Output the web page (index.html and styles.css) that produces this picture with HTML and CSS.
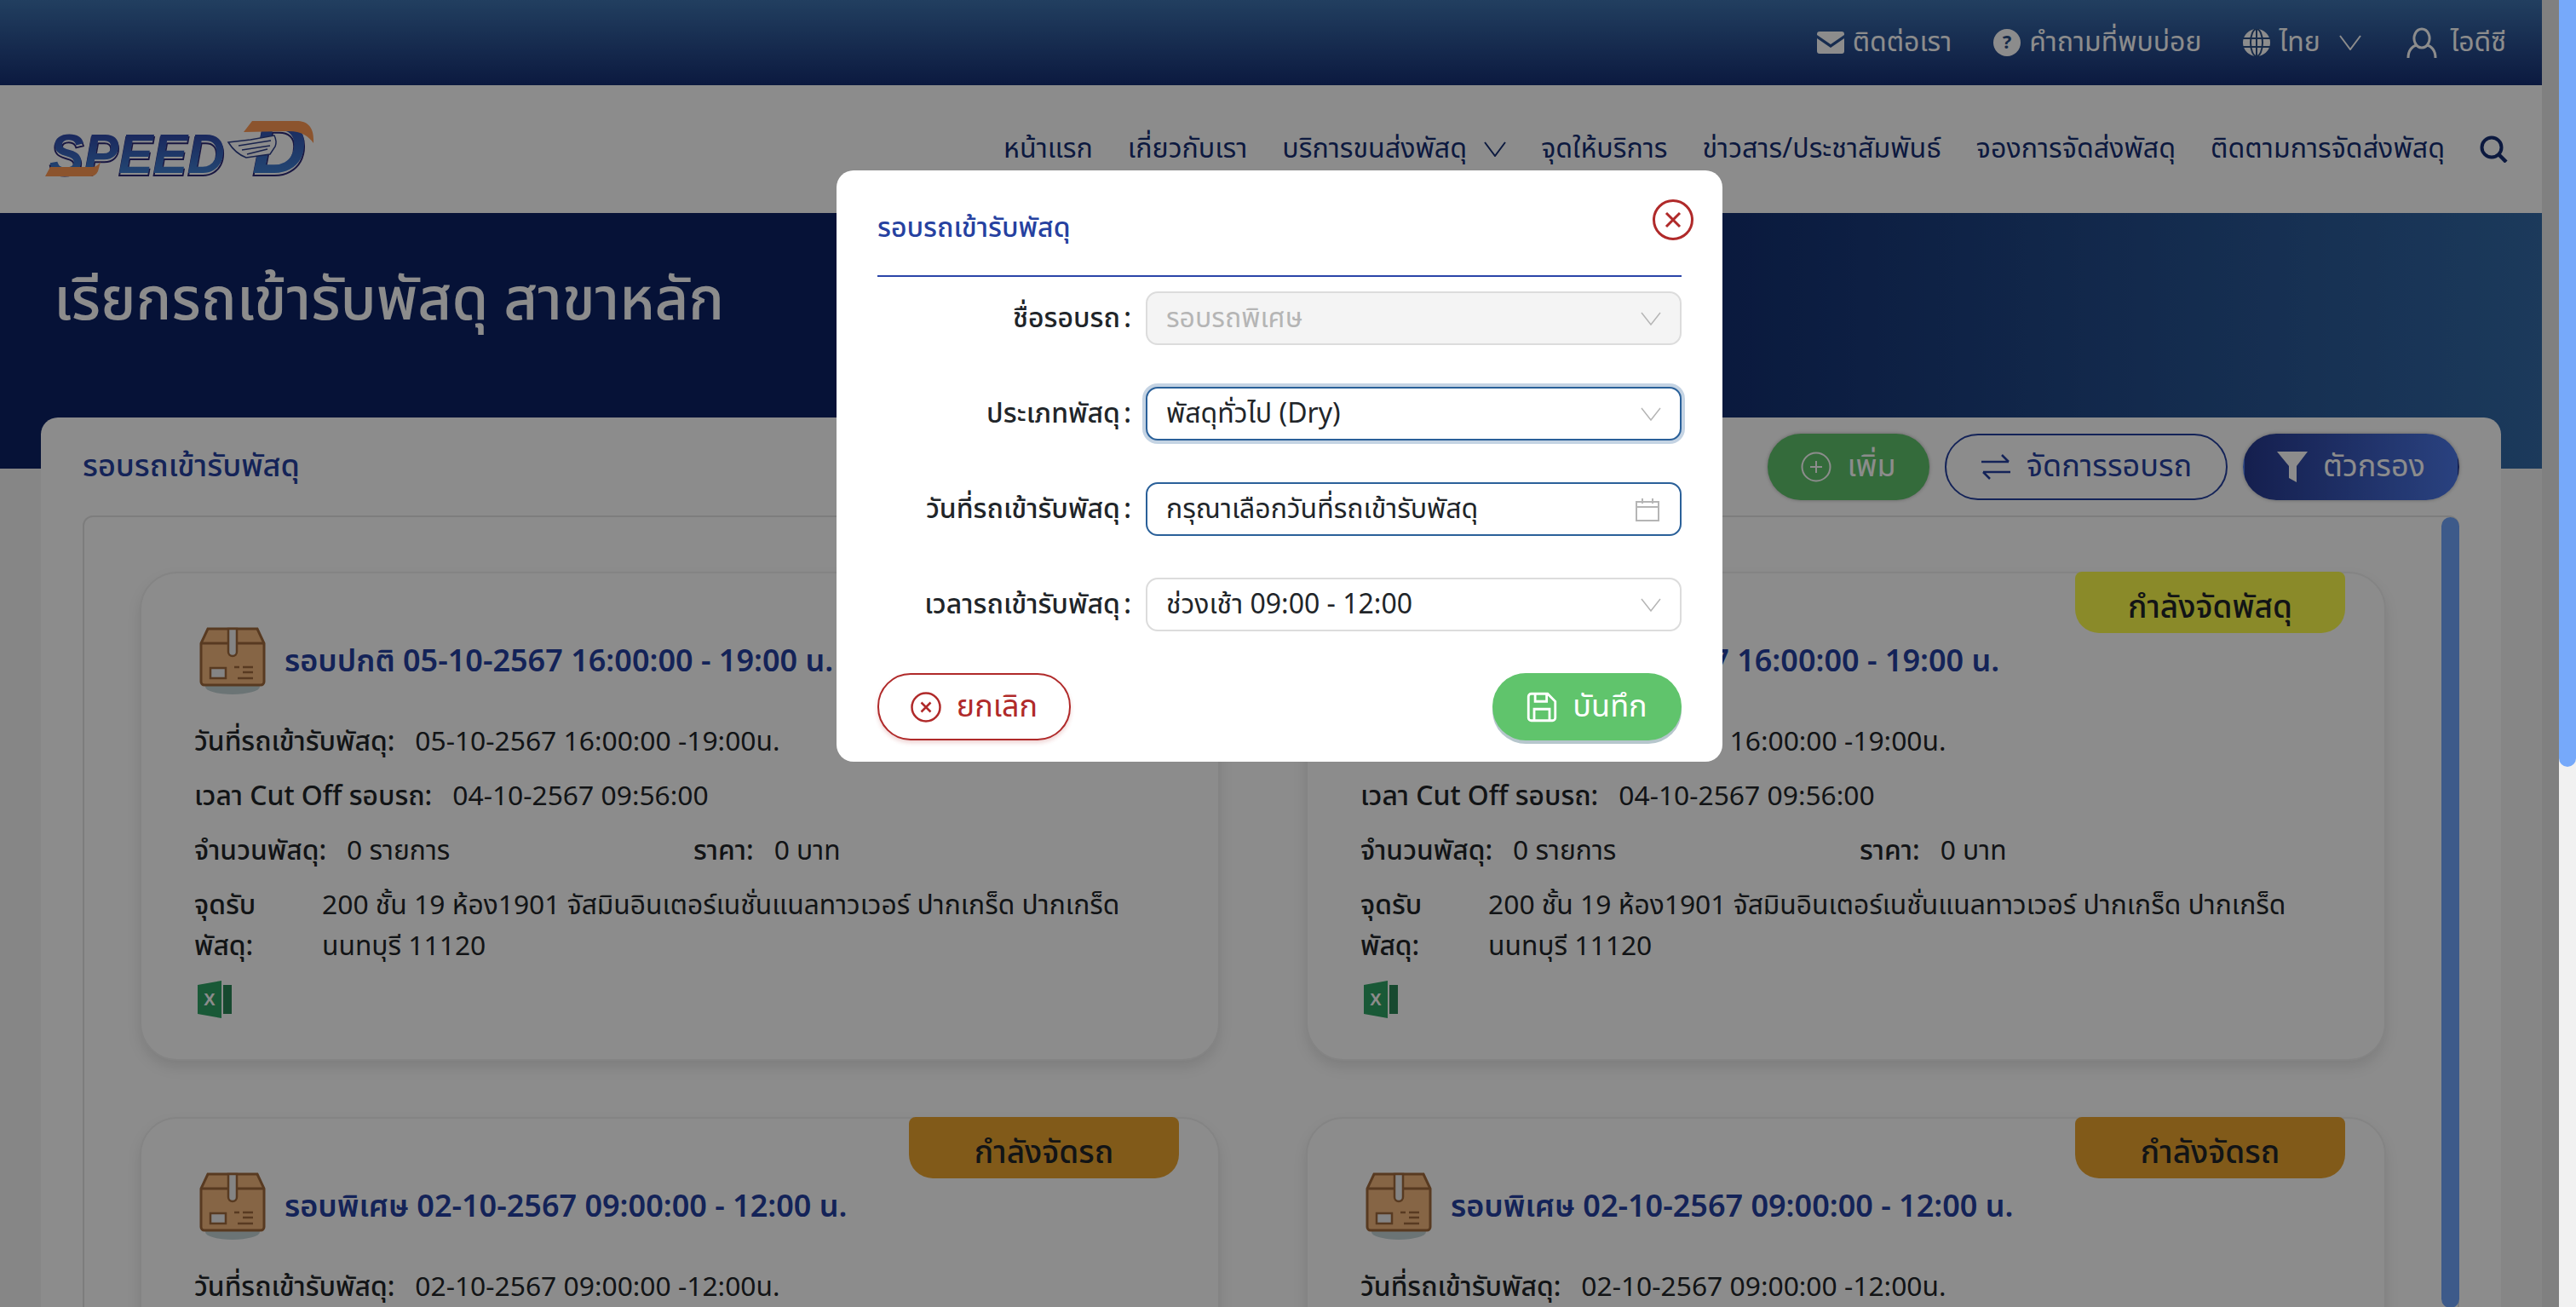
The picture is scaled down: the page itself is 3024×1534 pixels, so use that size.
FILE: index.html
```html
<!DOCTYPE html>
<html lang="th">
<head>
    <meta charset="UTF-8">
    <meta name="viewport" content="width=device-width, initial-scale=1.0">
    <title>เรียกรถเข้ารับพัสดุ</title>
    <link rel="stylesheet" href="styles.css">
</head>
<body>
<div class="app">
    <div class="viewport">
        <div class="page">
            <div class="topbar">
                <a class="topbar-item">
                    <svg class="ico-mail" viewBox="0 0 32 26"><path fill="#fff" d="M3 0h26a3 3 0 0 1 3 3v1L16 15 0 4V3a3 3 0 0 1 3-3zM0 8l16 11L32 8v15a3 3 0 0 1-3 3H3a3 3 0 0 1-3-3z"/></svg>
                    ติดต่อเรา
                </a>
                <a class="topbar-item">
                    <svg class="ico-round" viewBox="0 0 32 32"><circle cx="16" cy="16" r="16" fill="#fff"/><text x="16" y="23" text-anchor="middle" class="qmark">?</text></svg>
                    คำถามที่พบบ่อย
                </a>
                <a class="topbar-item">
                    <svg class="ico-round" viewBox="0 0 32 32"><circle cx="16" cy="16" r="16" fill="#fff"/><g fill="none" stroke="#2a4f86" stroke-width="2"><ellipse cx="16" cy="16" rx="7" ry="16"/><path d="M16 0v32M0 11h32M0 21h32"/></g></svg>
                    ไทย
                    <svg class="ico-chev" viewBox="0 0 26 18"><path d="M1 1l12 16L25 1" fill="none" stroke="#fff" stroke-width="2"/></svg>
                </a>
                <a class="topbar-item topbar-user">
                    <svg class="ico-user" viewBox="0 0 36 36"><path d="M18 2a9 11 0 1 0 0.01 0zM2 36c0-9 5-14 10-15M34 36c0-9-5-14-10-15" fill="none" stroke="#fff" stroke-width="3"/></svg>
                    ไอดีซี
                </a>
            </div>

            <div class="navbar">
                <svg class="logo" viewBox="48 136 326 76">
                    <defs>
                        <linearGradient id="logoblue" x1="0" y1="0" x2="0" y2="1">
                            <stop offset="0" stop-color="#2c3a9e"/>
                            <stop offset="1" stop-color="#4490dd"/>
                        </linearGradient>
                    </defs>
                    <g class="logo-text">
                        <text x="58" y="205" textLength="206" lengthAdjust="spacingAndGlyphs" class="logo-back">SPEED</text>
                        <text x="58" y="202" textLength="206" lengthAdjust="spacingAndGlyphs" fill="url(#logoblue)">SPEED</text>
                        <text x="296" y="205" class="logo-d logo-back">D</text>
                        <text x="296" y="202" class="logo-d" fill="url(#logoblue)">D</text>
                    </g>
                    <path fill="#ff9a55" d="M53 206l6-11h50c3 0 7-3 9-6l-3 11c-2 4-5 6-9 6zM286 154l10-13h52c14 0 21 8 20 26-6-9-16-15-32-14z"/>
                    <path fill="#fff" stroke="#2d3f8a" stroke-width="1.5" d="M268 166l26-3 28-5c2 4 3 8 1 13l-6 9-28 4c-8-3-16-10-21-18z"/>
                    <path fill="none" stroke="#2d3f8a" stroke-width="1.5" d="M280 170l38-6M284 175l33-5M290 180l24-6"/>
                </svg>
                <ul class="nav-menu">
                    <li>หน้าแรก</li>
                    <li>เกี่ยวกับเรา</li>
                    <li class="has-chev">บริการขนส่งพัสดุ
                        <svg class="ico-chev" viewBox="0 0 26 18"><path d="M1 1l12 16L25 1" fill="none" stroke="#162f74" stroke-width="2"/></svg>
                    </li>
                    <li>จุดให้บริการ</li>
                    <li>ข่าวสาร/ประชาสัมพันธ์</li>
                    <li>จองการจัดส่งพัสดุ</li>
                    <li>ติดตามการจัดส่งพัสดุ</li>
                    <li class="nav-search">
                        <svg viewBox="0 0 33 32"><circle cx="14" cy="14" r="11.5" fill="none" stroke="#162f74" stroke-width="4"/><path d="M22 22l9 9" stroke="#162f74" stroke-width="4.5"/></svg>
                    </li>
                </ul>
            </div>

            <div class="hero">
                <h1>เรียกรถเข้ารับพัสดุ สาขาหลัก</h1>
            </div>

            <div class="box">
                <div class="box-head">
                    <h2>รอบรถเข้ารับพัสดุ</h2>
                    <div class="box-actions">
                        <button class="btn btn-add">
                            <svg viewBox="0 0 36 36"><circle cx="18" cy="18" r="16.5" fill="none" stroke="#fff" stroke-width="2"/><path d="M18 11v14M11 18h14" stroke="#fff" stroke-width="2"/></svg>
                            เพิ่ม
                        </button>
                        <button class="btn btn-manage">
                            <svg viewBox="0 0 36 32"><path d="M1 10h32M25 2l8 8M35 22H3M11 30l-8-8" fill="none" stroke="#2641a0" stroke-width="2.5"/></svg>
                            จัดการรอบรถ
                        </button>
                        <button class="btn btn-filter">
                            <svg viewBox="0 0 36 36"><path d="M0 0h36L23 17v19l-9-5V17z" fill="#fff"/></svg>
                            ตัวกรอง
                        </button>
                    </div>
                </div>

                <div class="panel">
                    <div class="card-grid">

                        <div class="card">
                            <span class="badge badge-yellow">กำลังจัดพัสดุ</span>
                            <div class="card-head">
                                <svg class="ico-box" viewBox="0 0 80 84"><use href="#box"/></svg>
                                <h3>รอบปกติ 05-10-2567 16:00:00 - 19:00 น.</h3>
                            </div>
                            <div class="row"><b>วันที่รถเข้ารับพัสดุ:</b><span>05-10-2567 16:00:00 -19:00น.</span></div>
                            <div class="row"><b>เวลา Cut Off รอบรถ:</b><span>04-10-2567 09:56:00</span></div>
                            <div class="row row-split">
                                <div><b>จำนวนพัสดุ:</b><span>0 รายการ</span></div>
                                <div><b>ราคา:</b><span>0 บาท</span></div>
                            </div>
                            <div class="row-address">
                                <b>จุดรับพัสดุ:</b>
                                <span>200 ชั้น 19 ห้อง1901 จัสมินอินเตอร์เนชั่นแนลทาวเวอร์ ปากเกร็ด ปากเกร็ด<br>นนทบุรี 11120</span>
                            </div>
                            <svg class="ico-excel" viewBox="0 0 40 44"><use href="#excel"/></svg>
                        </div>

                        <div class="card">
                            <span class="badge badge-yellow">กำลังจัดพัสดุ</span>
                            <div class="card-head">
                                <svg class="ico-box" viewBox="0 0 80 84"><use href="#box"/></svg>
                                <h3>รอบปกติ 05-10-2567 16:00:00 - 19:00 น.</h3>
                            </div>
                            <div class="row"><b>วันที่รถเข้ารับพัสดุ:</b><span>05-10-2567 16:00:00 -19:00น.</span></div>
                            <div class="row"><b>เวลา Cut Off รอบรถ:</b><span>04-10-2567 09:56:00</span></div>
                            <div class="row row-split">
                                <div><b>จำนวนพัสดุ:</b><span>0 รายการ</span></div>
                                <div><b>ราคา:</b><span>0 บาท</span></div>
                            </div>
                            <div class="row-address">
                                <b>จุดรับพัสดุ:</b>
                                <span>200 ชั้น 19 ห้อง1901 จัสมินอินเตอร์เนชั่นแนลทาวเวอร์ ปากเกร็ด ปากเกร็ด<br>นนทบุรี 11120</span>
                            </div>
                            <svg class="ico-excel" viewBox="0 0 40 44"><use href="#excel"/></svg>
                        </div>

                        <div class="card">
                            <span class="badge badge-orange">กำลังจัดรถ</span>
                            <div class="card-head">
                                <svg class="ico-box" viewBox="0 0 80 84"><use href="#box"/></svg>
                                <h3>รอบพิเศษ 02-10-2567 09:00:00 - 12:00 น.</h3>
                            </div>
                            <div class="row"><b>วันที่รถเข้ารับพัสดุ:</b><span>02-10-2567 09:00:00 -12:00น.</span></div>
                        </div>

                        <div class="card">
                            <span class="badge badge-orange">กำลังจัดรถ</span>
                            <div class="card-head">
                                <svg class="ico-box" viewBox="0 0 80 84"><use href="#box"/></svg>
                                <h3>รอบพิเศษ 02-10-2567 09:00:00 - 12:00 น.</h3>
                            </div>
                            <div class="row"><b>วันที่รถเข้ารับพัสดุ:</b><span>02-10-2567 09:00:00 -12:00น.</span></div>
                        </div>

                    </div>
                    <div class="panel-scroll"><div class="panel-thumb"></div></div>
                </div>
            </div>
        </div>

        <div class="overlay">
            <div class="modal">
                <div class="modal-head">
                    <h4>รอบรถเข้ารับพัสดุ</h4>
                    <svg class="modal-close" viewBox="0 0 48 48"><circle cx="24" cy="24" r="22.5" fill="none" stroke="#b02a2a" stroke-width="3"/><path d="M16 16l16 16M32 16L16 32" stroke="#b02a2a" stroke-width="3"/></svg>
                </div>

                <div class="form-row">
                    <label>ชื่อรอบรถ :</label>
                    <div class="field field-disabled">รอบรถพิเศษ
                        <svg class="field-chev" viewBox="0 0 24 16"><path d="M1 1l11 14L23 1" fill="none" stroke="#b5b5b5" stroke-width="1.5"/></svg>
                    </div>
                </div>
                <div class="form-row">
                    <label>ประเภทพัสดุ :</label>
                    <div class="field field-focus">พัสดุทั่วไป (Dry)
                        <svg class="field-chev" viewBox="0 0 24 16"><path d="M1 1l11 14L23 1" fill="none" stroke="#b5b5b5" stroke-width="1.5"/></svg>
                    </div>
                </div>
                <div class="form-row">
                    <label>วันที่รถเข้ารับพัสดุ :</label>
                    <div class="field field-active">กรุณาเลือกวันที่รถเข้ารับพัสดุ
                        <svg class="field-cal" viewBox="0 0 28 28"><path d="M1 5h26v22H1zM1 11h26M8 1v6M20 1v6" fill="none" stroke="#b5b5b5" stroke-width="2"/></svg>
                    </div>
                </div>
                <div class="form-row">
                    <label>เวลารถเข้ารับพัสดุ :</label>
                    <div class="field">ช่วงเช้า 09:00 - 12:00
                        <svg class="field-chev" viewBox="0 0 24 16"><path d="M1 1l11 14L23 1" fill="none" stroke="#b5b5b5" stroke-width="1.5"/></svg>
                    </div>
                </div>

                <div class="modal-foot">
                    <button class="btn btn-cancel">
                        <svg viewBox="0 0 36 36"><circle cx="18" cy="18" r="16.5" fill="none" stroke="#b02a2a" stroke-width="2.5"/><path d="M12.5 12.5l11 11M23.5 12.5l-11 11" stroke="#b02a2a" stroke-width="2.5"/></svg>
                        ยกเลิก
                    </button>
                    <button class="btn btn-save">
                        <svg viewBox="0 0 32 32"><path d="M2 5a3 3 0 0 1 3-3h17l8 8v17a3 3 0 0 1-3 3H5a3 3 0 0 1-3-3zM9 2v8h12V2M8 30V18h16v12" fill="none" stroke="#fff" stroke-width="2.5"/></svg>
                        บันทึก
                    </button>
                </div>
            </div>
        </div>
    </div>

    <div class="scrollbar"><div class="scrollbar-thumb"></div></div>
</div>

<!-- icons used by every card -->
<svg class="icon-defs">
    <symbol id="box" viewBox="0 0 80 84">
        <ellipse cx="40" cy="71" rx="32" ry="9" fill="#c4d4d6"/>
        <path d="M11 3h58l8 17v45a4 4 0 0 1-4 4H7a4 4 0 0 1-4-4V20z" fill="#f5b97f" stroke="#a06a3c" stroke-width="3"/>
        <path d="M3 20h74" stroke="#a06a3c" stroke-width="3"/>
        <path d="M35 3h10v27a5 5 0 0 1-10 0z" fill="#f0f0f0" stroke="#a06a3c" stroke-width="2.5"/>
        <rect x="14" y="49" width="18" height="12" fill="#f0f0f0" stroke="#a06a3c" stroke-width="2.5"/>
        <path d="M42 48h6M52 48h12M52 54h12M46 61h18" stroke="#a06a3c" stroke-width="2.5"/>
    </symbol>
    <symbol id="excel" viewBox="0 0 40 44">
        <path d="M0 5L28 0v44L0 39z" fill="#2fa264"/>
        <path d="M30 5h10v34H30z" fill="#2b8657"/>
        <text x="14" y="29" text-anchor="middle" class="excel-x">X</text>
    </symbol>
</svg>
</body>
</html>
```
FILE: styles.css
```css
* {
    box-sizing: border-box;
}

html, body {
    margin: 0;
    height: 100%;
    overflow: hidden;
}

body {
    font-family: "Noto Sans", "Noto Sans Thai", "Open Sans", sans-serif;
    font-size: 31.8px;
    color: #212529;
    background-color: #fff;
}

.icon-defs {
    position: absolute;
    width: 0;
    height: 0;
}

.app {
    display: flex;
    height: 100vh;
}

.viewport {
    position: relative;
    flex: 1;
    overflow: hidden;
    background-color: #e9e9e9;
}

.scrollbar {
    width: 20px;
    background-color: #f1f1f1;
}

.scrollbar-thumb {
    height: 900px;
    background-color: #76a9fa;
    border-radius: 0 0 10px 10px;
}

.page {
    width: 2984px;
    height: 100%;
    overflow: hidden;
    background-color: #f5f5f5;
}

/* top bar */
.topbar {
    display: flex;
    justify-content: flex-end;
    align-items: center;
    gap: 49px;
    height: 100px;
    padding-right: 42px;
    background: linear-gradient(180deg, #3e73af, #162f74);
}

.topbar-item {
    display: flex;
    align-items: center;
    gap: 10px;
    color: #fff;
    font-size: 32px;
}

.topbar-user {
    margin-left: 4px;
}

.ico-mail {
    width: 32px;
    height: 26px;
}

.ico-round {
    width: 32px;
    height: 32px;
}

.qmark {
    font-size: 22px;
    font-weight: 700;
    fill: #2a4f86;
}

.ico-chev {
    width: 26px;
    height: 18px;
    margin-left: 12px;
}

.ico-user {
    width: 36px;
    height: 36px;
    margin-right: 6px;
}

/* nav */
.navbar {
    display: flex;
    justify-content: space-between;
    align-items: center;
    height: 150px;
    padding: 0 40px 0 48px;
    background-color: #fff;
}

.logo {
    width: 326px;
    height: 76px;
}

.logo-text {
    font-family: "Liberation Sans", sans-serif;
    font-weight: 700;
    font-style: italic;
    font-size: 65px;
}

.logo-d {
    font-size: 88px;
}

.logo-back {
    fill: #fff;
    stroke: #2d2a78;
    stroke-width: 2;
}

.nav-menu {
    display: flex;
    align-items: center;
    gap: 41px;
    margin: 0;
    padding: 0;
    list-style: none;
    color: #162f74;
    font-size: 32.2px;
}

.nav-menu li.has-chev {
    display: flex;
    align-items: center;
}

.nav-menu .ico-chev {
    margin-left: 20px;
}

.nav-search svg {
    display: block;
    width: 33px;
    height: 32px;
}

/* hero */
.hero {
    height: 300px;
    padding: 51px 0 0 63px;
    background: linear-gradient(90deg, #0b2164 60%, #336aa7);
}

.hero h1 {
    margin: 0;
    color: #fff;
    font-size: 69px;
    font-weight: 500;
}

/* main box */
.box {
    margin: -60px 48px 0;
    padding: 19px 49px 0;
    background-color: #fff;
    border-radius: 20px 20px 0 0;
}

.box-head {
    display: flex;
    justify-content: space-between;
    align-items: center;
    height: 77px;
    margin-bottom: 19px;
}

.box-head h2 {
    margin: 0;
    color: #2641a0;
    font-size: 36px;
    font-weight: 500;
}

.box-actions {
    display: flex;
    gap: 18px;
}

.btn {
    display: flex;
    justify-content: center;
    align-items: center;
    gap: 18px;
    height: 78px;
    border: 2px solid transparent;
    border-radius: 39px;
    font-family: inherit;
    font-size: 36px;
}

.btn svg {
    width: 36px;
    height: 36px;
}

.btn-add {
    width: 190px;
    color: #fff;
    background-color: #60c46c;
    box-shadow: 0 0 4px rgba(0, 0, 0, .3);
}

.btn-manage {
    width: 332px;
    color: #2641a0;
    background-color: #fff;
    border-color: #2641a0;
}

.btn-filter {
    width: 254px;
    color: #fff;
    background: linear-gradient(90deg, #26398f, #4c78e8);
    box-shadow: 0 0 4px rgba(0, 0, 0, .3);
}

/* panel with cards */
.panel {
    display: flex;
    justify-content: space-between;
    height: 1000px;
    border: 2px solid #e4e4e4;
    border-radius: 12px 12px 0 0;
}

.card-grid {
    display: grid;
    grid-template-columns: 1268px 1268px;
    grid-auto-rows: 574px;
    gap: 66px 101px;
    padding: 64px 0 0 65px;
}

.panel-scroll {
    width: 21px;
    margin-right: -2px;
}

.panel-thumb {
    height: 928px;
    background-color: #6fa4fb;
    border-radius: 11px;
}

.card {
    position: relative;
    padding: 62px 40px 0 62px;
    background-color: #fff;
    border: 2px solid #f0f0f0;
    border-radius: 44px;
    box-shadow: 0 8px 16px rgba(0, 0, 0, .1);
}

.badge {
    position: absolute;
    top: -2px;
    right: 46px;
    width: 317px;
    height: 72px;
    border-radius: 8px 8px 28px 28px;
    color: #212529;
    font-size: 37px;
    font-weight: 500;
    line-height: 80px;
    text-align: center;
}

.badge-yellow {
    background-color: #fbfb4b;
}

.badge-orange {
    background-color: #eba42f;
}

.card-head {
    display: flex;
    align-items: center;
    gap: 21px;
    margin-bottom: 26px;
}

.ico-box {
    width: 80px;
    height: 84px;
    margin-left: 5px;
}

.card-head h3 {
    margin: 0;
    color: #2641a0;
    font-size: 36px;
    font-weight: 600;
}

.row {
    height: 48px;
    margin-bottom: 16px;
    line-height: 48px;
    white-space: nowrap;
}

.row b, .row-address b {
    font-weight: 500;
}

.row b {
    margin-right: 24px;
}

.row-split {
    display: flex;
}

.row-split > div:first-child {
    width: 586px;
}

.row-address {
    display: grid;
    grid-template-columns: 150px 1fr;
    line-height: 48px;
    white-space: nowrap;
}

.row-address b {
    white-space: normal;
    width: 110px;
}

.ico-excel {
    display: block;
    width: 40px;
    height: 44px;
    margin-top: 18px;
    margin-left: 4px;
}

.excel-x {
    font-family: "Liberation Sans", sans-serif;
    font-size: 20px;
    font-weight: 700;
    fill: #fff;
}

/* modal */
.overlay {
    position: absolute;
    top: 0;
    left: 0;
    right: 0;
    bottom: 0;
    display: flex;
    justify-content: center;
    align-items: flex-start;
    padding-top: 200px;
    background-color: rgba(0, 0, 0, .45);
}

.modal {
    width: 1040px;
    height: 694px;
    padding: 0 48px;
    background-color: #fff;
    border-radius: 20px;
}

.modal-head {
    position: relative;
    height: 125px;
    padding-top: 44px;
    margin-bottom: 17px;
    border-bottom: 2px solid #2a45a8;
}

.modal-head h4 {
    margin: 0;
    color: #2641a0;
    font-size: 32px;
    font-weight: 500;
}

.modal-close {
    position: absolute;
    top: 34px;
    right: -14px;
    width: 48px;
    height: 48px;
}

.form-row {
    display: flex;
    justify-content: flex-end;
    align-items: center;
    gap: 17px;
    height: 63px;
    margin-bottom: 49px;
}

.form-row label {
    font-size: 32px;
    font-weight: 500;
    word-spacing: -4px;
    white-space: nowrap;
}

.field {
    position: relative;
    display: flex;
    align-items: center;
    width: 629px;
    height: 63px;
    padding-left: 22px;
    border: 2px solid #dcdcdc;
    border-radius: 14px;
    background-color: #fff;
    font-size: 32px;
}

.field-disabled {
    color: #b5b5b5;
    background-color: #f4f4f4;
}

.field-focus {
    border-color: #2a6099;
    box-shadow: 0 0 0 4px rgba(42, 96, 153, .28);
}

.field-active {
    border-color: #2a6099;
}

.field-chev {
    position: absolute;
    right: 22px;
    width: 24px;
    height: 16px;
}

.field-cal {
    position: absolute;
    right: 24px;
    width: 28px;
    height: 28px;
}

.modal-foot {
    display: flex;
    justify-content: space-between;
}

.btn-cancel {
    width: 227px;
    height: 79px;
    color: #b02a2a;
    background-color: #fff;
    border-color: #b02a2a;
    box-shadow: 0 3px 5px rgba(176, 42, 42, .2);
}

.btn-save {
    width: 222px;
    height: 79px;
    color: #fff;
    background-color: #60c46c;
    box-shadow: 0 4px 0 #b6c6cc;
}
```
